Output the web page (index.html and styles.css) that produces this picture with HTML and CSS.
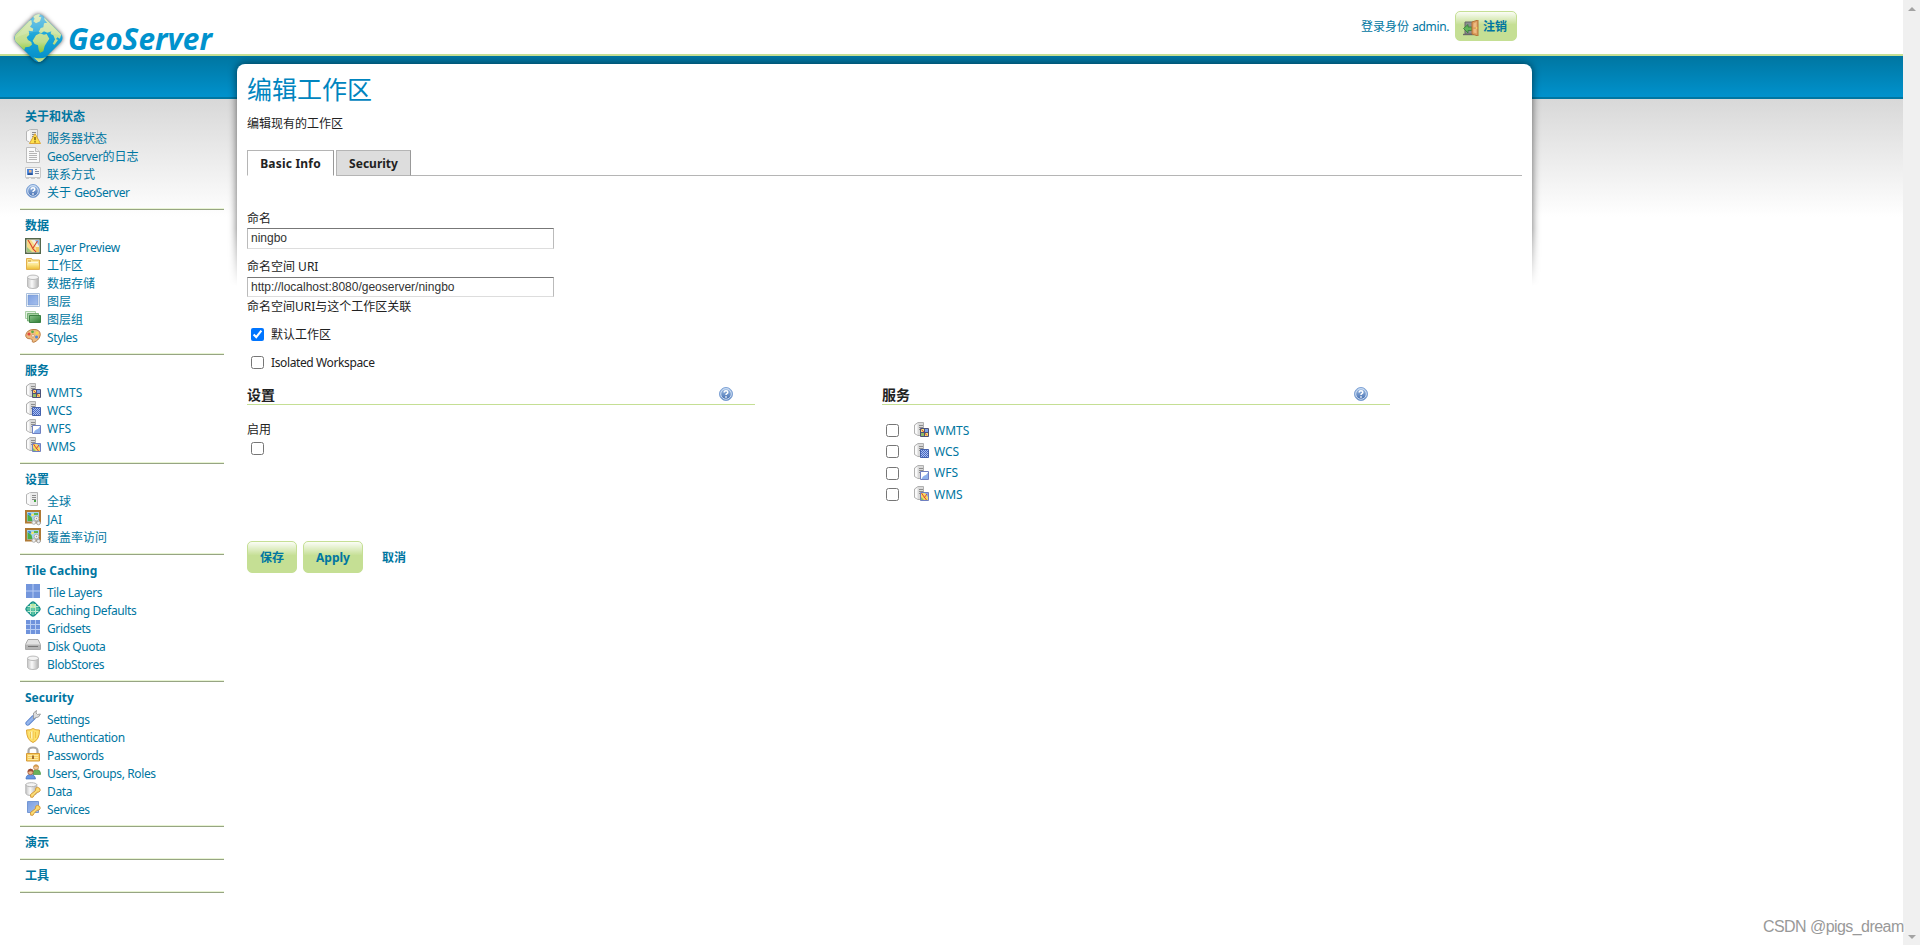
FILE: index.html
```html
<!DOCTYPE html>
<html lang="zh-CN">
<head>
<meta charset="utf-8">
<title>GeoServer: 编辑工作区</title>
<link rel="stylesheet" href="styles.css">
</head>
<body>
<svg class="defs" aria-hidden="true">
  <defs>
    <linearGradient id="gBlue" x1="0" y1="0" x2="1" y2="1"><stop offset="0" stop-color="#7d9fe0"/><stop offset="1" stop-color="#a5c0ee"/></linearGradient>
    <linearGradient id="gHelp" x1="0" y1="0" x2="0" y2="1"><stop offset="0" stop-color="#a9c6ea"/><stop offset="1" stop-color="#3b66ab"/></linearGradient>
    <linearGradient id="gGrey" x1="0" y1="0" x2="1" y2="0"><stop offset="0" stop-color="#c4c4c4"/><stop offset=".4" stop-color="#fafafa"/><stop offset="1" stop-color="#b0b0b0"/></linearGradient>
    <linearGradient id="gGreen" x1="0" y1="0" x2="1" y2="1"><stop offset="0" stop-color="#8cc48c"/><stop offset="1" stop-color="#2d7d32"/></linearGradient>
    <linearGradient id="gGold" x1="0" y1="0" x2="0" y2="1"><stop offset="0" stop-color="#fdeb98"/><stop offset="1" stop-color="#eec03b"/></linearGradient>
    <linearGradient id="gSea" x1="0" y1="0" x2="0" y2="1"><stop offset="0" stop-color="#6cc0e4"/><stop offset=".45" stop-color="#1ba6d9"/><stop offset="1" stop-color="#008bc6"/></linearGradient>
    <linearGradient id="gLand" gradientUnits="userSpaceOnUse" x1="0" y1="15" x2="0" y2="160"><stop offset="0" stop-color="#dcebc0"/><stop offset=".6" stop-color="#c0de8c"/><stop offset=".8" stop-color="#8fc83e"/><stop offset="1" stop-color="#c5df94"/></linearGradient>
    <clipPath id="logoClip"><path d="M22.500 4.500q4-3 8 0l18.500 18.500q3 4 0 8l-18.500 18.500q-4 3-8 0L4 31q-3-4 0-8z"/></clipPath>
  </defs>
  <symbol id="tower" viewBox="0 0 16 16"><path d="M5.500.5h7v13h-7l-4-2v-9z" fill="#ececec" stroke="#b5b5b5"/><path d="M5 1v12l-3-2V3z" fill="#fafafa"/><path d="M7 3.500h4M7 5.500h4M7 7.500h4" stroke="#8c8c8c"/></symbol>
  <symbol id="server" viewBox="0 0 16 16"><use href="#tower" width="16" height="16"/><path d="M9 8h2v2H9z" fill="#44a544"/></symbol>
  <symbol id="status" viewBox="0 0 16 16"><use href="#tower" width="16" height="16"/><path d="M10 4.700l5.500 9.800H4.500z" fill="#ffe14d" stroke="#dca63a" stroke-linejoin="round"/><path d="M10 8v3.200M10 12.200v1.200" stroke="#6b4900" stroke-width="1.300"/></symbol>
  <symbol id="doc" viewBox="0 0 16 16"><path d="M1.500.5h9l4 4v11h-13z" fill="#fafafa" stroke="#bdbdbd"/><path d="M10.500.5v4h4" fill="#eee" stroke="#bdbdbd"/><path d="M4 4.500h5M4 6.500h8M4 8.500h8M4 10.500h8M4 12.500h8" stroke="#b5b5b5"/></symbol>
  <symbol id="card" viewBox="0 0 16 16"><path d="M.5 2.500h15v10H.5z" fill="#f7f7f7" stroke="#c9c9c9"/><path d="M2 4h6v6H2z" fill="#4e86d8"/><path d="M4 5h2.500v2.500H4z" fill="#efb98a"/><path d="M3 8.300h4.500V10H3z" fill="#234f96"/><path d="M10 4.500h2M10 6.500h4M10 8.500h4" stroke="#7d8ba5"/><path d="M1 13.500h3M6 13.500h4M12 13.500h3" stroke="#ccc"/></symbol>
  <symbol id="help" viewBox="0 0 16 16"><circle cx="8" cy="8" r="6.500" fill="url(#gHelp)" stroke="#7fa3d6"/><circle cx="8" cy="8" r="5.300" fill="none" stroke="#d4e3f6" stroke-width="1"/><path d="M6.200 6.500q0-1.800 1.800-1.800t1.800 1.500q0 .9-.9 1.400T8 9M8 10.200v1.500" fill="none" stroke="#fff" stroke-width="1.500"/></symbol>
  <symbol id="preview" viewBox="0 0 16 16"><path d="M.7.7h14.600v14.600H.7z" fill="#f4efd8" stroke="#55674b" stroke-width="1.400"/><path d="M2 2h4l5 7-2 5H6L2 9z" fill="#f8dc86"/><path d="M10 2h4v6z" fill="#8fb6ea"/><path d="M2 9l5 5H2z" fill="#9cc67b"/><path d="M11 9h3v5h-4z" fill="#f4c95f"/><path d="M3 2l3 5 2 4 3 3M12.500 3L8 10" fill="none" stroke="#d8452e" stroke-width="1.100"/></symbol>
  <symbol id="folder" viewBox="0 0 16 16"><path d="M1.500 2.500h5l1 1.500h7v9.500h-13z" fill="#fbe38c" stroke="#e2ae4c"/><path d="M3 6.500h10" stroke="#fff8dc" stroke-width="1.500"/><path d="M2 8h12v5H2z" fill="url(#gGold)"/><path d="M3 5h3" stroke="#c5943a"/></symbol>
  <symbol id="db" viewBox="0 0 16 16"><path d="M2.500 3v9.500q1 2 5.500 2t5.500-2V3z" fill="url(#gGrey)" stroke="#bcbcbc"/><ellipse cx="8" cy="3.300" rx="5.500" ry="2.200" fill="#f3f3f3" stroke="#bcbcbc"/></symbol>
  <symbol id="layer" viewBox="0 0 16 16"><path d="M1.500 1.500h13v13h-13z" fill="#fff" stroke="#a9bfdc"/><path d="M3 3h10v10H3z" fill="url(#gBlue)" stroke="#7498cf" stroke-width=".6"/></symbol>
  <symbol id="group" viewBox="0 0 16 16"><path d="M.5 1.500h10v7H.5z" fill="#e4f1e2" stroke="#a9cfa6"/><path d="M2.500 3.500h11v7.500h-11z" fill="#a4cf9f" stroke="#66a566" stroke-width=".8"/><path d="M4.500 5.500h11v7h-11z" fill="url(#gGreen)" stroke="#3c8243"/></symbol>
  <symbol id="palette" viewBox="0 0 16 16"><path d="M8 1.500q7-.5 7.300 5 0 4-4 6.500-3 2.200-4 .8 1-3-2-3-5 0-4.500-4Q2 2 8 1.500z" fill="#edbb81" stroke="#bd7d43"/><circle cx="4" cy="6" r="1.600" fill="#e54a3d"/><circle cx="7.500" cy="3.800" r="1.400" fill="#5bad46"/><circle cx="12" cy="5" r="1.500" fill="#f6de4b"/><circle cx="11.500" cy="9" r="1.500" fill="#4e88d8"/><circle cx="8" cy="7.800" r="1.300" fill="#fff" stroke="#bd7d43" stroke-width=".6"/></symbol>
  <symbol id="svc" viewBox="0 0 16 16"><path d="M5 .5h5.500v13H5l-3.500-2V3z" fill="#d9d9d9" stroke="#b0b0b0"/><path d="M4.500 1.500V13L2 11V3.500z" fill="#fafafa"/><path d="M6 3.500h4M6 5.500h4M6 7.500h4" stroke="#8d8d8d"/></symbol>
  <symbol id="wmts" viewBox="0 0 16 16"><use href="#svc" width="16" height="16"/><path d="M7.500 6.500h8v8h-8z" fill="#f5dd74" stroke="#4d5278"/><path d="M12 7h3v3h-3z" fill="#7fa3e8"/><path d="M8 11h3v3H8z" fill="#8fbb68"/><path d="M8.500 7.500l5.500 6" stroke="#dd4232"/><path d="M7.500 10.500h8M11.500 6.500v8" stroke="#4d5278"/></symbol>
  <symbol id="wcs" viewBox="0 0 16 16"><use href="#svc" width="16" height="16"/><path d="M7.500 6.500h8v8h-8z" fill="#4a68c0" stroke="#4561ad"/><path d="M8 7.500h7M8 9.500h7M8 11.500h7M8 13.500h7" stroke="#a9c0f2" stroke-dasharray="1 1"/><path d="M9 8.500h6M9 10.500h6M9 12.500h6" stroke="#a9c0f2" stroke-dasharray="1 1"/></symbol>
  <symbol id="wfs" viewBox="0 0 16 16"><use href="#svc" width="16" height="16"/><path d="M7.500 6.500h8v8h-8z" fill="#fff" stroke="#6f80c1"/><path d="M15 7.500V14H8.500q1-3 3-3.500t3.500-3z" fill="#8db0ec"/></symbol>
  <symbol id="wms" viewBox="0 0 16 16"><use href="#svc" width="16" height="16"/><path d="M7.500 6.500h8v8h-8z" fill="#f5d965" stroke="#6f80c1"/><path d="M12 7h3v4z" fill="#8aabe8"/><path d="M8 11l3 3H8z" fill="#88bb68"/><path d="M8.500 7l2 3 3 4M14 8l-3 4" fill="none" stroke="#de4532"/></symbol>
  <symbol id="jai" viewBox="0 0 16 16"><path d="M1 1h14v11.500H1z" fill="#a5d4ee" stroke="#b07a35" stroke-width="2"/><path d="M2.500 11V4l4 3 1 4z" fill="#4cae44"/><path d="M9 3h4v2H9z" fill="#5cb851"/><path d="M2.500 3h3l1 2-2 1z" fill="#3c8bd6"/><circle cx="7.500" cy="5" r="1.300" fill="#f8e86a"/><circle cx="11.500" cy="8.500" r="2.300" fill="#f1f1f1" stroke="#b3b3b3"/><circle cx="8.800" cy="12.500" r="1.800" fill="#f1f1f1" stroke="#b3b3b3"/><circle cx="13.500" cy="13" r="1.800" fill="#eee" stroke="#a5a5a5"/><circle cx="11.500" cy="8.500" r=".7" fill="#999"/></symbol>
  <symbol id="tiles" viewBox="0 0 16 16"><path d="M1 1h14v14H1z" fill="#b8cdf4"/><path d="M1 1h6.500v6.500H1zM8.500 1H15v6.500H8.500zM1 8.500h6.500V15H1zM8.500 8.500H15V15H8.500z" fill="#7396dc"/></symbol>
  <symbol id="cache" viewBox="0 0 16 16"><path d="M6.500 1.500q1.500-1.200 3 0l5 5q1.200 1.500 0 3l-5 5q-1.500 1.200-3 0l-5-5q-1.200-1.500 0-3z" fill="#45b89c" stroke="#168e88" stroke-width="1.200"/><path d="M6 3h4v4H6z" fill="#ccec9c"/><path d="M5.500 3v10M10.500 3v10M2.500 5.500h11M2.500 10.500h11" stroke="#c4ecd2"/><path d="M8 2v12M2 8h12" stroke="#8bd7b5" stroke-width=".7"/></symbol>
  <symbol id="grid" viewBox="0 0 16 16"><path d="M1 1h14v14H1z" fill="#6f93dc"/><path d="M5.500 1v14M10.500 1v14M1 5.500h14M1 10.500h14" stroke="#b9cef4"/></symbol>
  <symbol id="disk" viewBox="0 0 16 16"><path d="M3 2.500h10l2.500 5v5H.5v-5z" fill="#e3e3e3" stroke="#aaa"/><path d="M1 7.500h14v4.500H1z" fill="#b5b5b5"/><path d="M3 9.500h10" stroke="#777"/></symbol>
  <symbol id="wrench" viewBox="0 0 16 16"><path d="M8.500 7.500L2.700 13.300" stroke="#547fca" stroke-width="4.600" stroke-linecap="round"/><path d="M8.500 7.500L2.700 13.300" stroke="#94b5ec" stroke-width="3" stroke-linecap="round"/><path d="M8.500 5.500V3l3-2.500L11 3l1.500 1.500L15.500 4l-2 3-3 .8-2 1.200z" fill="#ddd" stroke="#909090" stroke-width=".8"/></symbol>
  <symbol id="shield" viewBox="0 0 16 16"><path d="M1.500 2q4 .3 6.500-1.500Q10.500 2.300 14.500 2q0 10-6.500 12.500Q1.500 12 1.500 2z" fill="#fde06a" stroke="#dfa534"/><path d="M4.500 4Q7 3.500 8 2.800v9Q5 10 4.500 4z" fill="#fff5b8"/><path d="M8 3v9M10.500 4v6M5.500 4v6" stroke="#edb93a" stroke-width=".8"/></symbol>
  <symbol id="lock" viewBox="0 0 16 16"><path d="M3.500 8V5q0-3.500 4.500-3.500T12.500 5v3" fill="none" stroke="#a9a9a9" stroke-width="2.200"/><path d="M1.500 7.500h13v7.500h-13z" fill="#f8cf62" stroke="#d69a37"/><path d="M3 9.500h10M3 11.500h10M3 13.500h10" stroke="#fff0b4" stroke-width=".8"/><path d="M7 9.500h2V13H7z" fill="#a4702a"/></symbol>
  <symbol id="users" viewBox="0 0 16 16"><path d="M8 9q0-3.500 3.500-3.500T15.500 9v1.500H8z" fill="#68b25a" stroke="#438e3d" stroke-width=".6"/><circle cx="11" cy="3.300" r="2.500" fill="#f1c69b" stroke="#c08a50" stroke-width=".8"/><path d="M8.500 3Q9 .5 11.200.7T13.700 3q-3-1-5.200 0z" fill="#d49a48"/><path d="M1 15q0-4.500 4.500-4.500T10.500 15z" fill="#6897e2" stroke="#4170bb" stroke-width=".7"/><circle cx="5.500" cy="8" r="2.700" fill="#eeba90" stroke="#a95e3e" stroke-width=".8"/><path d="M2.700 8q.3-3.300 3-3.200T8.400 8q-2.500-1.500-5.700 0z" fill="#9d4e35"/></symbol>
  <symbol id="key" viewBox="0 0 16 16"><path d="M5.500 12.500l5-4q-.5-3 2-3.200 3 .7 2.700 3-.7 2.400-3.200 2L9 13.500l-1 1.700H5.700z" fill="#fbdc73" stroke="#cf9130" stroke-width=".9"/></symbol>
  <symbol id="dbkey" viewBox="0 0 16 16"><path d="M.8 2.500v9q1 2 5 2t6-2v-9z" fill="url(#gGrey)" stroke="#b5b5b5"/><ellipse cx="6.300" cy="2.700" rx="5.500" ry="2" fill="#f4f4f4" stroke="#b5b5b5"/><use href="#key" width="16" height="16"/></symbol>
  <symbol id="layerkey" viewBox="0 0 16 16"><path d="M2.500 1.500h11v11h-11z" fill="url(#gBlue)" stroke="#7397d4"/><use href="#key" width="16" height="16"/></symbol>
  <symbol id="door" viewBox="0 0 16 16"><path d="M2 2h8v12H2z" fill="#8b9090" stroke="#686868"/><path d="M0 14.500h11" stroke="#686868" stroke-width="1.400"/><path d="M.5 8.500L5 4.500V7h4v3.500H5V13z" fill="#61b55a" stroke="#347c38" stroke-width=".8"/><path d="M9 2l6-2v16l-6-2z" fill="#dc9d5e" stroke="#b57539"/><path d="M10.500 3.500L13.500 2v5l-3 .5zM10.500 9h3v4.500l-3-1z" fill="#edbb81"/><circle cx="13.500" cy="8" r=".8" fill="#ffe868"/></symbol>
</svg>

<div class="page">
  <header class="header">
    <a class="logo">
      <svg class="logo-mark" viewBox="0 0 53 54">
        <g clip-path="url(#logoClip)">
          <path d="M0 0h53v54H0z" fill="url(#gSea)"/>
          <g transform="scale(.3333) translate(-12 -9)" fill="url(#gLand)">
            <path d="M20 78l38-38 12-4 2 12-6 8 10 6-2 8-12-2 2 12-8 8 4 8 10 6 2 8-8 6-12 2-6 14-14-14-12-18z"/>
            <path d="M72 22l16-8 10 4-6 8 8 2-4 12-12 6-8-6 4-8z"/>
            <path d="M108 26l52 52-4 14-8-4-6 8-6-14-8-4 2-8-12 4-10-4-8 6-8-4 6-12 8-2 2-12 10-2-8-8z"/>
            <path d="M84 82l12-6 12 4 8-2 8 14-8 12-6 10-4 16-10 4-4-8-2-14-10-4-6-10z"/>
            <path d="M142 92l8 4-10 14-6-2zM76 148q18 6 42-2l-22 20z"/>
          </g>
          <path d="M2 28L24 4q2-1 5 0l22 22Q26 14 2 28z" fill="#fff" opacity=".14"/>
        </g>
      </svg>
      <svg class="logo-text" viewBox="0 0 156 40"><text x="1" y="31" textLength="144" lengthAdjust="spacingAndGlyphs">GeoServer</text></svg>
    </a>
    <div class="login">
      <span>登录身份 <span class="latin">admin.</span></span>
      <button class="btn btn-logout"><svg class="icon"><use href="#door"/></svg>注销</button>
    </div>
  </header>
  <div class="band"></div>

  <div class="body">
    <nav class="sidebar">
      <section><h3>关于和状态</h3><ul>
        <li><svg class="icon"><use href="#status"/></svg><a>服务器状态</a></li>
        <li><svg class="icon"><use href="#doc"/></svg><a><span class="latin">GeoServer</span>的日志</a></li>
        <li><svg class="icon"><use href="#card"/></svg><a>联系方式</a></li>
        <li><svg class="icon"><use href="#help"/></svg><a>关于 <span class="latin">GeoServer</span></a></li>
      </ul></section>
      <section><h3>数据</h3><ul>
        <li><svg class="icon"><use href="#preview"/></svg><a class="latin">Layer Preview</a></li>
        <li><svg class="icon"><use href="#folder"/></svg><a>工作区</a></li>
        <li><svg class="icon"><use href="#db"/></svg><a>数据存储</a></li>
        <li><svg class="icon"><use href="#layer"/></svg><a>图层</a></li>
        <li><svg class="icon"><use href="#group"/></svg><a>图层组</a></li>
        <li><svg class="icon"><use href="#palette"/></svg><a class="latin">Styles</a></li>
      </ul></section>
      <section><h3>服务</h3><ul>
        <li><svg class="icon"><use href="#wmts"/></svg><a>WMTS</a></li>
        <li><svg class="icon"><use href="#wcs"/></svg><a>WCS</a></li>
        <li><svg class="icon"><use href="#wfs"/></svg><a>WFS</a></li>
        <li><svg class="icon"><use href="#wms"/></svg><a>WMS</a></li>
      </ul></section>
      <section><h3>设置</h3><ul>
        <li><svg class="icon"><use href="#server"/></svg><a>全球</a></li>
        <li><svg class="icon"><use href="#jai"/></svg><a>JAI</a></li>
        <li><svg class="icon"><use href="#jai"/></svg><a>覆盖率访问</a></li>
      </ul></section>
      <section><h3>Tile Caching</h3><ul>
        <li><svg class="icon"><use href="#tiles"/></svg><a class="latin">Tile Layers</a></li>
        <li><svg class="icon"><use href="#cache"/></svg><a class="latin">Caching Defaults</a></li>
        <li><svg class="icon"><use href="#grid"/></svg><a class="latin">Gridsets</a></li>
        <li><svg class="icon"><use href="#disk"/></svg><a class="latin">Disk Quota</a></li>
        <li><svg class="icon"><use href="#db"/></svg><a class="latin">BlobStores</a></li>
      </ul></section>
      <section><h3>Security</h3><ul>
        <li><svg class="icon"><use href="#wrench"/></svg><a class="latin">Settings</a></li>
        <li><svg class="icon"><use href="#shield"/></svg><a class="latin">Authentication</a></li>
        <li><svg class="icon"><use href="#lock"/></svg><a class="latin">Passwords</a></li>
        <li><svg class="icon"><use href="#users"/></svg><a class="latin">Users, Groups, Roles</a></li>
        <li><svg class="icon"><use href="#dbkey"/></svg><a class="latin">Data</a></li>
        <li><svg class="icon"><use href="#layerkey"/></svg><a class="latin">Services</a></li>
      </ul></section>
      <section><h3>演示</h3></section>
      <section><h3>工具</h3></section>
    </nav>

    <div class="main-wrap">
      <div class="main-shadow"><div class="main-shadow-box"></div></div>
      <main class="main">
        <h1>编辑工作区</h1>
        <p class="desc">编辑现有的工作区</p>
        <div class="tabs">
          <a class="tab tab-active">Basic Info</a>
          <a class="tab">Security</a>
          <span class="tab-rest"></span>
        </div>
        <form class="form">
          <label class="label">命名</label>
          <input class="field field-name" type="text" value="ningbo">
          <label class="label label-uri">命名空间 URI</label>
          <input class="field" type="text" value="http://localhost:8080/geoserver/ningbo">
          <p class="hint">命名空间URI与这个工作区关联</p>
          <label class="check"><input type="checkbox" checked>默认工作区</label>
          <label class="check check-second"><input type="checkbox"><span class="latin">Isolated Workspace</span></label>
          <div class="columns">
            <section class="column">
              <h2>设置<svg class="icon"><use href="#help"/></svg></h2>
              <label class="enabled">启用<input type="checkbox"></label>
            </section>
            <section class="column">
              <h2>服务<svg class="icon"><use href="#help"/></svg></h2>
              <ul class="services">
                <li><input type="checkbox"><svg class="icon"><use href="#wmts"/></svg><a>WMTS</a></li>
                <li><input type="checkbox"><svg class="icon"><use href="#wcs"/></svg><a>WCS</a></li>
                <li><input type="checkbox"><svg class="icon"><use href="#wfs"/></svg><a>WFS</a></li>
                <li><input type="checkbox"><svg class="icon"><use href="#wms"/></svg><a>WMS</a></li>
              </ul>
            </section>
          </div>
          <div class="actions">
            <button type="button" class="btn btn-save">保存</button>
            <button type="button" class="btn btn-apply">Apply</button>
            <a class="cancel">取消</a>
          </div>
        </form>
      </main>
    </div>
  </div>
</div>
<div class="scrollbar"><i class="arrow arrow-up"></i><i class="arrow arrow-down"></i></div>
<div class="watermark">CSDN @pigs_dream</div>
</body>
</html>
```

FILE: styles.css
```css
* { box-sizing: border-box; margin: 0; padding: 0; }
body {
  display: flex;
  height: 945px;
  overflow: hidden;
  background: #fff;
  color: #222;
  font: 12px/18px "Noto Sans", "Noto Sans CJK SC", sans-serif;
}
ul { list-style: none; }
a { color: #0076a1; text-decoration: none; }
.latin { letter-spacing: -.38px; }
.defs { position: absolute; width: 0; height: 0; }
.icon { width: 16px; height: 16px; flex: none; display: block; }

.page { flex: 1; height: 945px; }
.header {
  position: relative;
  z-index: 2;
  display: flex;
  justify-content: space-between;
  align-items: flex-start;
  width: 1517px;
  height: 54px;
  padding: 11px 0 0 12px;
}
.logo { display: flex; }
.logo-mark { width: 53px; height: 54px; filter: drop-shadow(0 0 2px rgba(0, 0, 0, .65)); }
.logo-text { width: 156px; height: 40px; margin: 8px 0 0 2px; overflow: visible; }
.logo-text text { font: italic 700 31px "Noto Sans", sans-serif; fill: #0092cd; }
.login { display: flex; align-items: center; gap: 6px; color: #0076a1; }
.login > span { padding-top: 2px; }

.btn {
  display: flex;
  align-items: center;
  justify-content: center;
  border: 1px solid #c5df94;
  border-radius: 5px;
  background: linear-gradient(#fbfdf6, #c5df94 45%);
  color: #0076a1;
  font: bold 12px/18px "Noto Sans", "Noto Sans CJK SC", sans-serif;
  padding-top: 1px;
}
.btn-logout { width: 62px; height: 30px; gap: 4px; padding-right: 2px; }
.btn-logout .icon { margin-top: 3px; }

.band {
  height: 45px;
  border-top: 2px solid #c5df94;
  border-bottom: 2px solid #0076a1;
  background: linear-gradient(#0076a1, #0092cd);
}
.body {
  display: flex;
  align-items: flex-start;
  height: 846px;
  background: linear-gradient(#d8d8d8, #fff 118px);
}

.sidebar { width: 204px; margin: 2px 13px 0 20px; }
.sidebar section { padding: 6px 5px 8px; border-bottom: 1px solid #97a583; box-shadow: inset 0 -1px #e8f4d3; }
.sidebar h3 { font-size: 12px; line-height: 19px; height: 18px; color: #0076a1; }
.sidebar ul { margin-top: 4px; }
.sidebar li { display: flex; gap: 6px; height: 18px; line-height: 20px; }

.main-wrap { position: relative; width: 1295px; margin-top: -35px; }
.main-shadow {
  position: absolute;
  inset: -8px -12px auto;
  height: 230px;
  padding: 8px 12px 0;
  overflow: hidden;
  -webkit-mask-image: linear-gradient(#000 75%, transparent);
  mask-image: linear-gradient(#000 75%, transparent);
}
.main-shadow-box { height: 300px; border-radius: 8px; box-shadow: 0 0 9px rgba(0, 0, 0, .6); }
.main { position: relative; height: 881px; padding: 10px 10px 0; border-radius: 8px 8px 0 0; background: #fff; }

h1 { height: 30px; font-size: 25px; line-height: 30px; font-weight: 400; color: #0085bf; }
.desc { margin-top: 11px; }
.tabs { display: flex; margin-top: 17px; height: 26px; }
.tab {
  width: 75px;
  border: 1px solid #b5b5b5;
  border-right-color: #999;
  background: #ddd;
  color: #222;
  font-weight: bold;
  line-height: 26px;
  text-align: center;
  margin-left: 2px;
}
.tab-active { width: 87px; margin-left: 0; background: #fff; border-bottom-color: #fff; letter-spacing: .2px; }
.tab-rest { flex: 1; border-bottom: 1px solid #b5b5b5; }

.form { padding-top: 34px; }
.label { display: block; }
.label-uri { margin: 9px 0 1px; }
.field {
  display: block;
  width: 307px;
  height: 20px;
  padding: 0 3px 1px;
  border: 1px solid #bbb;
  border-top-color: #777;
  border-bottom-color: #ddd;
  color: #333;
  font: 12px "Liberation Sans", Arial, sans-serif;
}
.field-name { height: 21px; padding-bottom: 2px; }
.hint { margin-top: 1px; }
input[type="checkbox"] { width: 13px; height: 13px; margin: 0; flex: none; }
.check { display: flex; align-items: center; gap: 7px; height: 17px; margin: 10px 0 0 4px; }
.check-second { margin-top: 11px; }

.columns { display: flex; gap: 127px; margin-top: 14px; height: 156px; }
.column { width: 508px; }
h2 { display: flex; justify-content: space-between; height: 20px; padding-right: 21px; border-bottom: 1px solid #c5df94; font-size: 14px; line-height: 19px; }
h2 .icon { margin-top: 1px; }
.enabled { display: block; margin-top: 16px; }
.enabled input { display: block; margin: 3px 0 0 4px; }
.services { margin-top: 15px; }
.services li { display: flex; align-items: center; height: 21.330px; padding-left: 4px; }
.services .icon { margin: -1px 5px 0 14px; }

.actions { display: flex; align-items: center; gap: 6px; }
.btn-save { width: 50px; height: 32px; }
.btn-apply { width: 60px; height: 32px; }
.cancel { padding: 1px 0 0 13px; font-weight: bold; }

.scrollbar { width: 17px; height: 945px; display: flex; flex-direction: column; justify-content: space-between; align-items: center; padding: 7px 0 6px; background: #f0f0f0; }
.arrow { border: 4px solid transparent; border-top-width: 0; border-bottom-color: #a3a3a3; }
.arrow-down { border-width: 4px 4px 0; border-color: #a3a3a3 transparent transparent; }
.watermark { position: absolute; left: 1763px; top: 916px; font: 16px/22px "Liberation Sans", Arial, sans-serif; letter-spacing: -.56px; color: #999; text-shadow: 1px 1px #fff; white-space: nowrap; }
```
